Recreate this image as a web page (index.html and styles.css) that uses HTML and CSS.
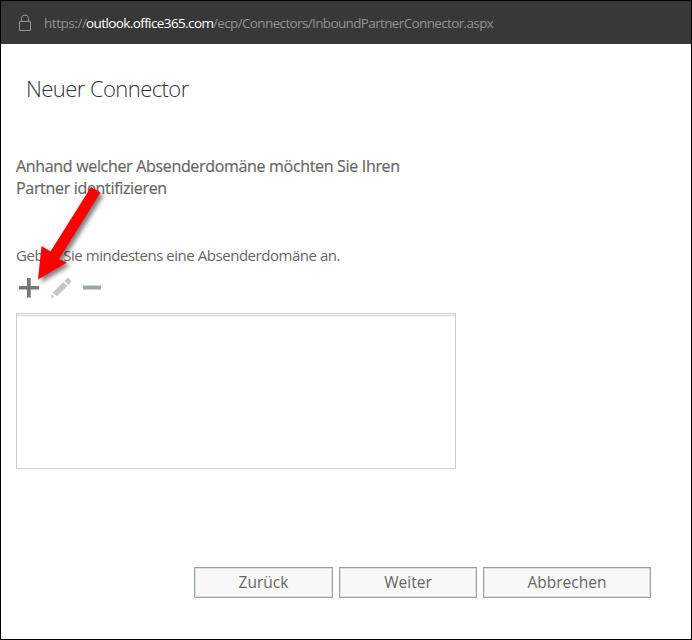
FILE: index.html
```html
<!DOCTYPE html>
<html lang="de">
<head>
<meta charset="utf-8">
<title>Neuer Connector</title>
<link rel="stylesheet" href="styles.css">
</head>
<body>
<div class="window">
  <header class="address-bar">
    <svg class="lock" width="14" height="18" viewBox="0 0 14 18" fill="none" stroke="#949494"><path d="M1.500 7.500h11v9h-11zM3.500 7.500V4.500a3.500 3.500 0 0 1 7 0V7.500"/></svg>
    <div class="url"><span class="scheme">https://</span><span class="domain">outlook.office365.com</span><span class="path">/ecp/Connectors/InboundPartnerConnector.aspx</span></div>
  </header>
  <main class="content">
    <h1 class="title">Neuer Connector</h1>
    <h2 class="question">Anhand welcher Absenderdomäne möchten Sie Ihren<br>Partner identifizieren</h2>
    <p class="label">Geben Sie mindestens eine Absenderdomäne an.</p>
    <div class="toolbar">
      <svg width="20" height="20" viewBox="0 0 20 20"><path d="M8 0h3.700v8H20v3.500h-8.300V19.500H8v-8H0V8h8z" fill="#777"/></svg>
      <svg width="20" height="20" viewBox="0 0 20 20" fill="#c6c6c6"><path d="M0 20L.7 16.500L3.500 19.300zM1.800 14.500L12.300 4L16.300 8L5.800 18.500zM13.300 3L15.600.7Q17-.6 18.300.7L19.500 1.900Q20.700 3.200 19.500 4.600L17.300 7z"/></svg>
      <svg width="18" height="20" viewBox="0 0 18 20"><path d="M0 7.500h18v4H0z" fill="#9ba6a9"/></svg>
    </div>
    <div class="list"></div>
    <div class="actions">
      <button class="btn">Zurück</button>
      <button class="btn next">Weiter</button>
      <button class="btn cancel">Abbrechen</button>
    </div>
  </main>
  <svg class="arrow" width="90" height="110" viewBox="0 0 90 110"><path d="M66 7L75.500 12.500L34 79L42 82.500L13 99.500L16.500 66L25.500 71.500z" fill="#fe0000"/></svg>
</div>
</body>
</html>
```
FILE: styles.css
```css
* { box-sizing: border-box; }
body { margin: 0; font-family: "Open Sans", sans-serif; color: #666; }
.window { position: relative; width: 692px; height: 640px; border: 1px solid #000; background: #fff; overflow: hidden; }
.address-bar { display: flex; align-items: center; height: 43px; padding-left: 17px; background: #383838; }
.lock { margin-right: 12px; flex: none; }
.url { display: flex; font-size: 13.5px; line-height: 20px; color: #929292; white-space: nowrap; }
.scheme { width: 42px; letter-spacing: -0.45px; }
.domain { width: 127px; letter-spacing: -0.6px; color: #fff; }
.path { letter-spacing: -0.64px; }
.content { padding: 0 0 0 15px; }
h1, h2, p { margin: 0; font-weight: 400; white-space: nowrap; }
.title { padding: 29px 0 0 10px; font-size: 22px; line-height: 30px; font-weight: 300; color: #333; letter-spacing: -0.57px; }
.question { margin-top: 52px; font-size: 16px; line-height: 22px; letter-spacing: -0.32px; -webkit-text-stroke: 0.2px #666; }
.label { margin-top: 45px; font-size: 15px; line-height: 22px; letter-spacing: -0.46px; }
.toolbar { display: flex; gap: 12px; height: 20px; margin: 12px 0 0 3px; }
.list { width: 440px; height: 156px; margin-top: 15px; border: 1px solid #c8d0d3; border-top: 3px double #c8d0d3; }
.actions { display: flex; gap: 6px; margin: 98px 0 0 178px; }
.btn { width: 139px; height: 31px; padding: 0 0 1px; border: 1px solid #98a3a6; box-shadow: inset 0 0 0 1px #dce2e4; background: #f8f8f8; font: 15.5px "Open Sans", sans-serif; color: #666; }
.next { width: 138px; }
.cancel { width: 168px; }
.arrow { position: absolute; left: 24px; top: 179px; overflow: visible; filter: drop-shadow(3px 3px 2px rgba(0, 0, 0, 0.5)); }
```
